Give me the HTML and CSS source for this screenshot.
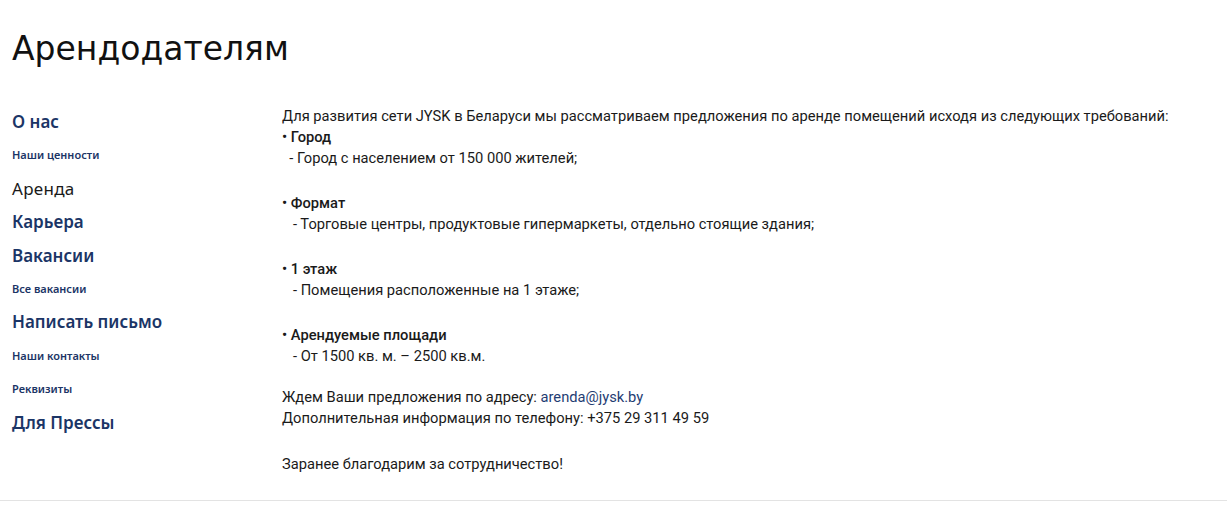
FILE: index.html
```html
<!DOCTYPE html>
<html lang="ru">
<head>
<meta charset="utf-8">
<title>Арендодателям</title>
<link rel="stylesheet" href="styles.css">
</head>
<body>
<div class="page">
  <h1 class="title">Арендодателям</h1>
  <div class="layout">
    <nav class="side">
      <a class="nav-main" href="#">О нас</a>
      <a class="nav-sub" href="#">Наши ценности</a>
      <a class="nav-main active" href="#">Аренда</a>
      <a class="nav-main" href="#">Карьера</a>
      <a class="nav-main" href="#">Вакансии</a>
      <a class="nav-sub" href="#">Все вакансии</a>
      <a class="nav-main" href="#">Написать письмо</a>
      <a class="nav-sub" href="#">Наши контакты</a>
      <a class="nav-sub" href="#">Реквизиты</a>
      <a class="nav-main" href="#">Для Прессы</a>
    </nav>
    <main class="content">
      <p class="line">Для развития сети JYSK в Беларуси мы рассматриваем предложения по аренде помещений исходя из следующих требований:</p>
      <div class="group">
        <p class="line"><b>• Город</b></p>
        <p class="line sub">&nbsp;&nbsp;- Город с населением от 150 000 жителей;</p>
      </div>
      <div class="group">
        <p class="line"><b>• Формат</b></p>
        <p class="line sub">&nbsp;&nbsp;&nbsp;- Торговые центры, продуктовые гипермаркеты, отдельно стоящие здания;</p>
      </div>
      <div class="group">
        <p class="line"><b>• 1 этаж</b></p>
        <p class="line sub">&nbsp;&nbsp;&nbsp;- Помещения расположенные на 1 этаже;</p>
      </div>
      <div class="group">
        <p class="line"><b>• Арендуемые площади</b></p>
        <p class="line sub">&nbsp;&nbsp;&nbsp;- От 1500 кв. м. – 2500 кв.м.</p>
      </div>
      <div class="group contact">
        <p class="line">Ждем Ваши предложения по адресу: <a class="mail" href="#">arenda@jysk.by</a></p>
        <p class="line">Дополнительная информация по телефону: +375 29 311 49 59</p>
      </div>
      <div class="group thanks">
        <p class="line">Заранее благодарим за сотрудничество!</p>
      </div>
    </main>
  </div>
</div>
<div class="rule"></div>
</body>
</html>
```
FILE: styles.css
```css
html, body {
  margin: 0;
  padding: 0;
  background: #ffffff;
}
body {
  font-family: "Noto Sans", sans-serif;
  color: #1a1a1a;
}
.page {
  padding: 0 12px;
  height: 500px;
  box-sizing: border-box;
}
.title {
  margin: 0;
  padding-top: 27px;
  font-family: "DejaVu Sans", "Noto Sans", sans-serif;
  font-weight: 400;
  font-size: 33px;
  line-height: 44px;
  color: #111;
}
.layout {
  display: grid;
  grid-template-columns: 270px 1fr;
  margin-top: 34px;
}
.side {
  display: flex;
  flex-direction: column;
}
.side a {
  text-decoration: none;
  line-height: 33.4px;
  height: 33.4px;
  color: #1b3566;
}
.nav-main {
  font-size: 17px;
  font-weight: 600;
}
.nav-main.active {
  color: #1a1a1a;
  font-weight: 400;
  letter-spacing: 0.3px;
}
.nav-sub {
  font-size: 11px;
  font-weight: 600;
}
.content {
  padding-top: 1px;
  font-family: "Roboto", sans-serif;
  font-size: 14.7px;
  color: #1a1a1a;
}
.line {
  margin: 0;
  line-height: 21px;
}
.line b {
  font-weight: 500;
}
.group {
  margin-top: 24px;
}
.content > .line + .group {
  margin-top: 0;
}
.contact {
  margin-top: 20px;
}
.thanks {
  margin-top: 25px;
}
.mail {
  color: #1f3d73;
  text-decoration: none;
}
.rule {
  border-top: 1px solid #e3e3e3;
}
```
